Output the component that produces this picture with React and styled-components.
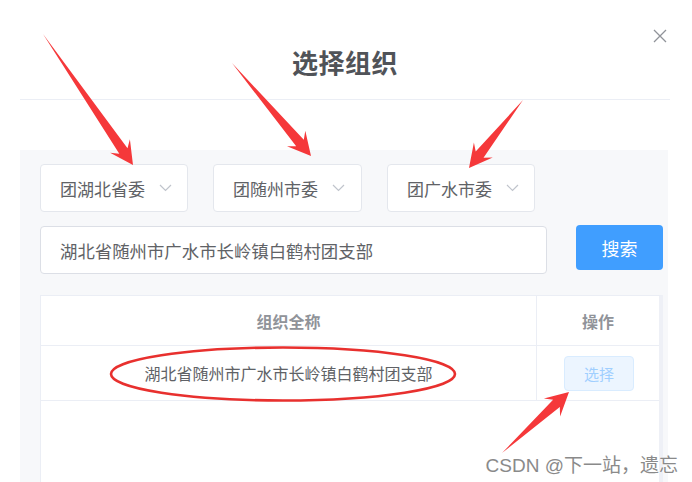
import React from 'react';
import styled, { createGlobalStyle } from 'styled-components';

const GlobalStyle = createGlobalStyle`
    html, body {
        margin: 0;
        padding: 0;
        background: #fff;
    }
    body {
        font-family: "Noto Sans CJK SC", "Noto Sans", sans-serif;
    }
`;

const Page = styled.div`
    position: relative;
    width: 692px;
    height: 482px;
    overflow: hidden;
    padding-left: 20px;
    box-sizing: border-box;
    background: #fff;
`;

const Header = styled.div`
    position: relative;
    width: 650px;
    height: 100px;
    box-sizing: border-box;
    padding-top: 47px;
    border-bottom: 1px solid #ebeef5;
    text-align: center;
`;

const Title = styled.h2`
    margin: 0;
    font-size: 26px;
    line-height: 30px;
    font-weight: 700;
    color: #505358;
    letter-spacing: 0.5px;
`;

const CloseButton = styled.button`
    position: absolute;
    top: 29px;
    right: 3px;
    width: 14px;
    height: 14px;
    padding: 0;
    border: 0;
    background: none;
    cursor: pointer;
`;

const Panel = styled.div`
    width: 648px;
    margin-top: 50px;
    height: 340px;
    box-sizing: border-box;
    padding: 14px 5px 0 20px;
    background: #f7f8fa;
    display: flex;
    flex-direction: column;
`;

const SelectRow = styled.div`
    display: flex;
    gap: 25px;
`;

const Select = styled.div`
    width: ${p => p.width}px;
    height: 48px;
    box-sizing: border-box;
    border: 1px solid #e4e7ed;
    border-radius: 4px;
    background: #fff;
    display: flex;
    align-items: center;
    padding-left: 19px;
    gap: 14px;
    font-size: 17px;
    color: #606266;
`;

const SearchRow = styled.div`
    display: flex;
    align-items: flex-start;
    margin-top: 14px;
`;

const SearchInput = styled.div`
    width: 507px;
    height: 48px;
    box-sizing: border-box;
    border: 1px solid #dcdfe6;
    border-radius: 4px;
    background: #fff;
    display: flex;
    align-items: center;
    padding-left: 19px;
    font-size: 17.4px;
    color: #606266;
`;

const SearchButton = styled.button`
    margin: -1px 0 0 29px;
    width: 87px;
    height: 45px;
    border: 0;
    border-radius: 4px;
    background: #409eff;
    color: #fff;
    font-family: inherit;
    font-size: 18px;
    cursor: pointer;
`;

const Table = styled.div`
    margin-top: 21px;
    flex: 1;
    width: 623px;
    box-sizing: border-box;
    background: #fff;
    border-top: 1px solid #ebeef5;
    border-left: 1px solid #ebeef5;
    border-right: 4px solid #eef0f6;
`;

const Row = styled.div`
    display: grid;
    grid-template-columns: 495px 1fr;
    height: ${p => p.height}px;
    border-bottom: 1px solid #ebeef5;
`;

const Cell = styled.div`
    display: flex;
    align-items: center;
    justify-content: center;
    font-size: 16px;
    font-weight: ${p => (p.head ? 700 : 400)};
    color: ${p => (p.head ? '#909399' : '#606266')};
    & + & {
        border-left: 1px solid #ebeef5;
    }
`;

const PickButton = styled.button`
    width: 70px;
    height: 35px;
    border: 1px solid #d9ecff;
    border-radius: 4px;
    background: #ecf5ff;
    color: #a0cfff;
    font-family: inherit;
    font-size: 15px;
    margin-left: 2px;
`;

const Overlay = styled.svg`
    position: absolute;
    left: 0;
    top: 0;
    pointer-events: none;
`;

const Watermark = styled.div`
    position: absolute;
    right: 14px;
    top: 450px;
    font-family: "Liberation Sans", "Noto Sans CJK SC", sans-serif;
    font-size: 19px;
    color: #8a8a8a;
    text-shadow: 0 0 2px #fff, 0 0 2px #fff;
    white-space: nowrap;
`;

function Chevron() {
    return (
        <svg width="13" height="8" viewBox="0 0 13 8">
            <polyline points="1,1 6.5,6.5 12,1" fill="none" stroke="#c0c4cc" strokeWidth="1.2" />
        </svg>
    );
}

// tail is a point, shaft widens to the neck, then swept-back barbs
function arrowPoints([x1, y1], [x2, y2]) {
    const len = Math.hypot(x2 - x1, y2 - y1);
    const dx = (x2 - x1) / len;
    const dy = (y2 - y1) / len;
    const px = -dy;
    const py = dx;
    const at = (back, side) => [x2 - dx * back + px * side, y2 - dy * back + py * side];
    const pts = [
        [x1, y1],
        at(17, 5),
        at(23, 12),
        [x2, y2],
        at(23, -12),
        at(17, -5),
    ];
    return pts.map(p => p.map(v => v.toFixed(1)).join(',')).join(' ');
}

const arrows = [
    [[43, 34], [133, 165]],
    [[232, 63], [311, 156]],
    [[523, 100], [469, 168]],
    [[502, 453], [569, 392]],
];

const selects = [
    { label: '团湖北省委', width: 148 },
    { label: '团随州市委', width: 149 },
    { label: '团广水市委', width: 148 },
];

export default function App() {
    return (
        <>
            <GlobalStyle />
            <Page>
                <Header>
                    <Title>选择组织</Title>
                    <CloseButton aria-label="close">
                        <svg width="14" height="14" viewBox="0 0 14 14">
                            <path d="M1 1 L13 13 M13 1 L1 13" stroke="#909399" strokeWidth="1.3" />
                        </svg>
                    </CloseButton>
                </Header>
                <Panel>
                    <SelectRow>
                        {selects.map(s => (
                            <Select key={s.label} width={s.width}>
                                {s.label}
                                <Chevron />
                            </Select>
                        ))}
                    </SelectRow>
                    <SearchRow>
                        <SearchInput>湖北省随州市广水市长岭镇白鹤村团支部</SearchInput>
                        <SearchButton>搜索</SearchButton>
                    </SearchRow>
                    <Table>
                        <Row height={49}>
                            <Cell head>组织全称</Cell>
                            <Cell head>操作</Cell>
                        </Row>
                        <Row height={54}>
                            <Cell>湖北省随州市广水市长岭镇白鹤村团支部</Cell>
                            <Cell>
                                <PickButton>选择</PickButton>
                            </Cell>
                        </Row>
                    </Table>
                </Panel>
                <Overlay width="692" height="482" viewBox="0 0 692 482">
                    <ellipse cx="283" cy="374" rx="172" ry="26.5" fill="none" stroke="#e8302e" strokeWidth="2.6" />
                    {arrows.map((a, i) => (
                        <polygon key={i} points={arrowPoints(a[0], a[1])} fill="#f5383a" />
                    ))}
                </Overlay>
                <Watermark>CSDN @下一站，遗忘</Watermark>
            </Page>
        </>
    );
}
